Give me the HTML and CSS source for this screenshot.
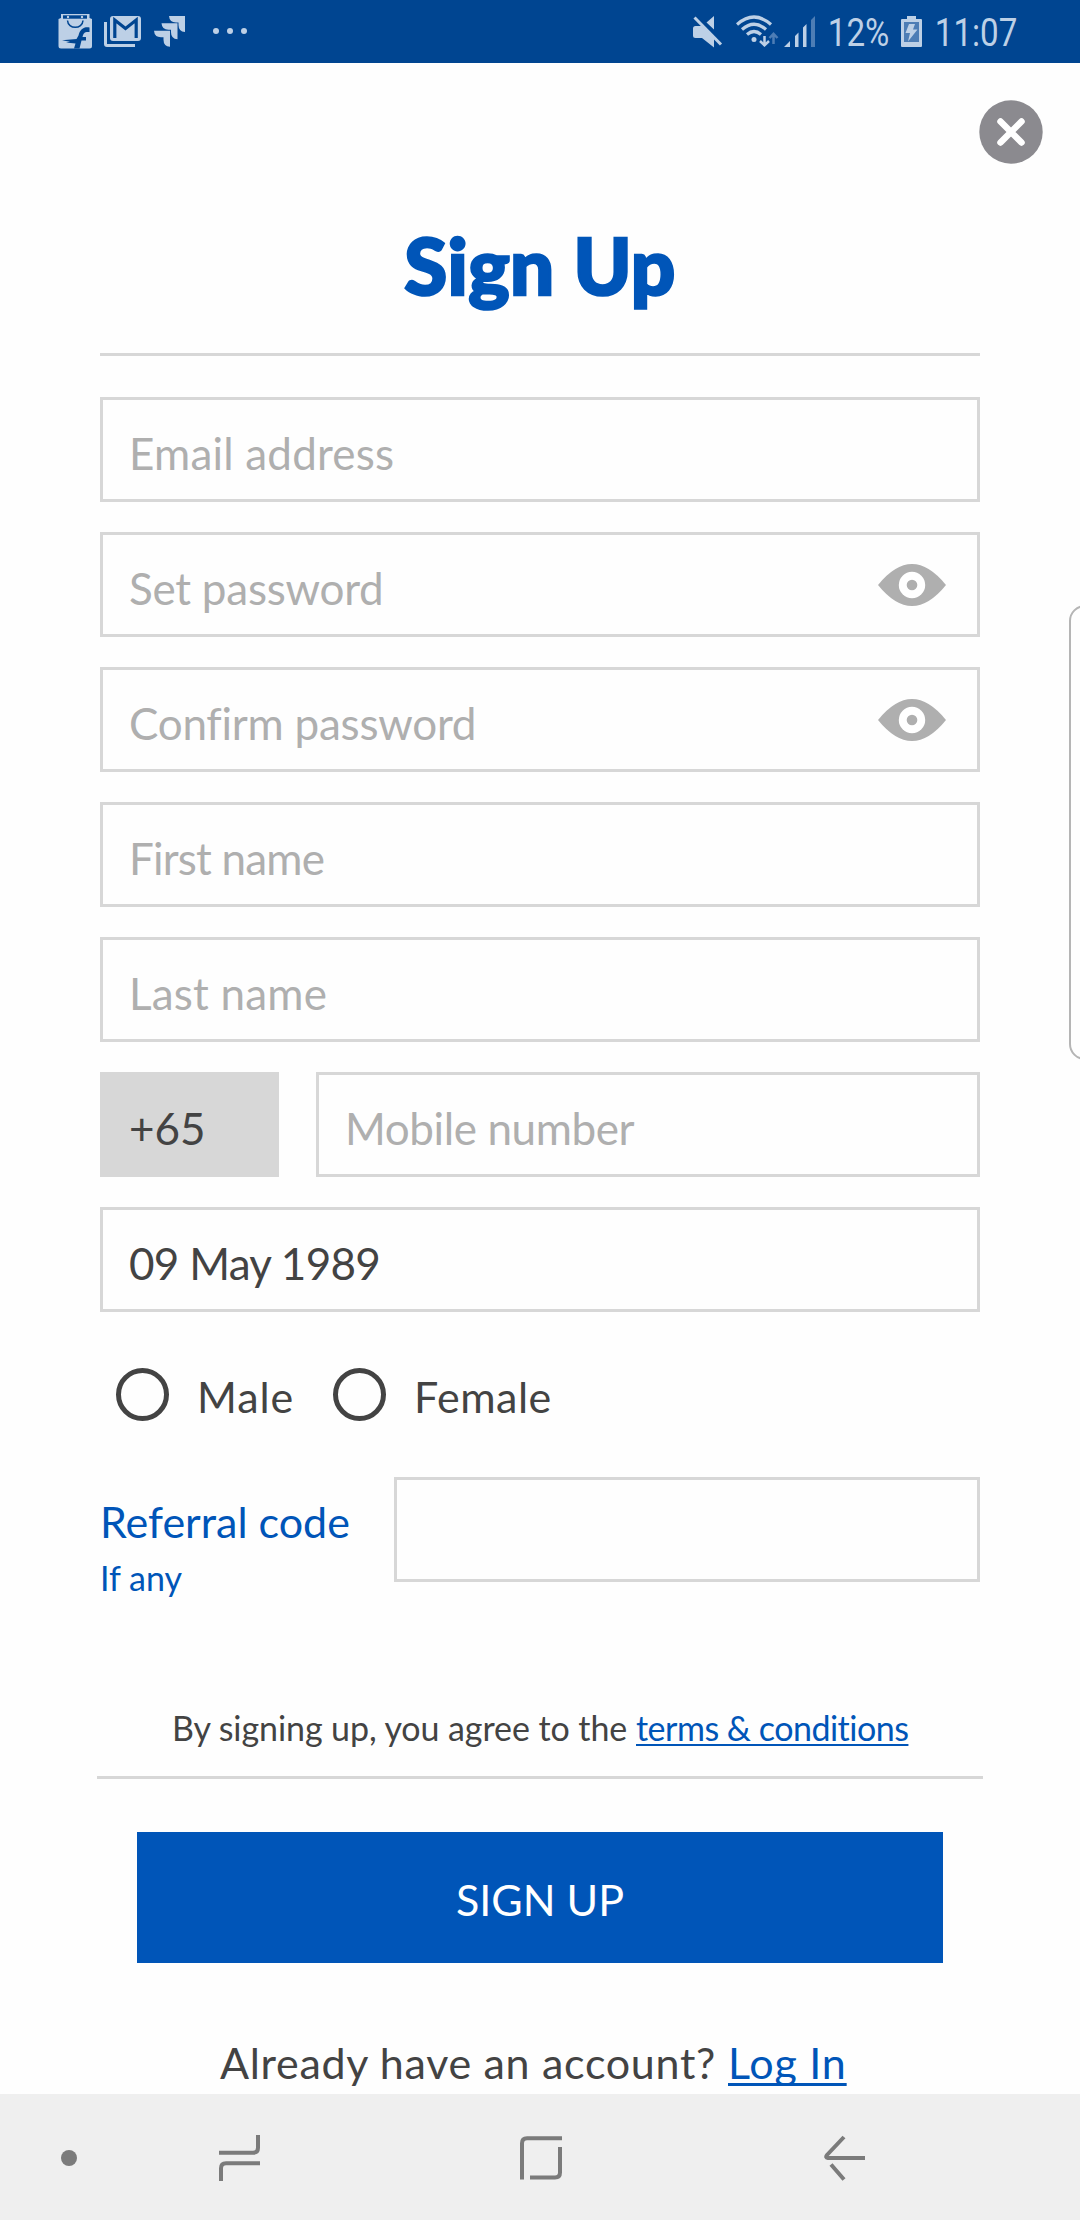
FILE: index.html
```html
<!DOCTYPE html>
<html lang="en">
<head>
<meta charset="utf-8">
<title>Sign Up</title>
<link rel="stylesheet" href="styles.css">
</head>
<body>
<div class="screen">
  <header class="status">
    <div class="status-left">
      <svg class="ic-bag" width="35" height="35" viewBox="0 0 35 35">
        <path fill="#bdd0e6" d="M3 0H31.500V4L34 5V32Q34 34.500 31.500 34.500H3Q.5 34.500.5 32V5L3 4Z"/>
        <path fill="#004591" d="M5 1.300H29V4.700H5Z"/>
        <path fill="none" stroke="#004591" stroke-width="1.500" d="M9.500 6.500C10 15.500 24.500 15.500 25 6.500"/>
        <circle cx="10" cy="3" r="1.200" fill="#bdd0e6"/><circle cx="24" cy="3" r="1.200" fill="#bdd0e6"/>
        <path fill="#004591" d="M31.500 13.500C26 12.500 22 15 20.500 21.500L18.500 25L4 26.200L12 27.700L8 28.500L17.500 29.500L16 34.500H21.500L23.500 26.500H28V23H24.500C25.500 18.500 27 17.500 31.500 18Z"/>
      </svg>
      <svg class="ic-mail" width="37" height="31" viewBox="0 0 37 31">
        <path fill="#bdd0e6" d="M0 6H3V28H31V31H3Q0 31 0 28Z"/>
        <rect x="6" y="0" width="31" height="25" rx="3" fill="#bdd0e6"/>
        <path fill="none" stroke="#004591" stroke-width="3.200" d="M10.800 22V4L21.500 12.500L32.200 4V22"/>
      </svg>
      <svg class="ic-jira" width="31" height="31" viewBox="0 0 31 31">
        <g fill="#bdd0e6"><path d="M15 0H31V16Q24.500 15.500 24.500 9V6.500H22Q15.500 6.500 15 0Z"/><path d="M7.500 7.300H23.500V23.300Q17 22.800 17 16.300V13.800H14.500Q8 13.800 7.500 7.300Z"/><path d="M0 14.800H16V30.800Q9.500 30.300 9.500 23.800V21.300H7Q.5 21.300 0 14.800Z"/></g>
      </svg>
      <svg class="ic-more" width="34" height="6" viewBox="0 0 34 6" fill="#bdd0e6"><circle cx="3" cy="3" r="3"/><circle cx="17" cy="3" r="3"/><circle cx="31" cy="3" r="3"/></svg>
    </div>
    <div class="status-right">
      <svg class="ic-mute" width="30" height="32" viewBox="0 0 30 32">
        <path fill="#bdd0e6" d="M0 12.500Q0 10 2.500 10H9L21 22V31.500L9 22H2.500Q0 22 0 19.500ZM13.500 6.500L21 0V13.500Z"/>
        <path stroke="#bdd0e6" stroke-width="3" d="M1.500 1.500L28 28.500"/>
      </svg>
      <svg class="ic-wifi" width="43" height="32" viewBox="0 0 43 32">
        <g fill="none" stroke="#bdd0e6" stroke-width="3.200"><path d="M1 9.500Q18 -5.500 35 9.500"/><path d="M6 14.500Q18 4 30 14.500"/><path d="M11 19.500Q18 13.500 25 19.500"/></g>
        <circle cx="18" cy="24.500" r="2.500" fill="#bdd0e6"/>
        <path fill="none" stroke="#bdd0e6" stroke-width="2.500" d="M28.500 21V30M24 26L28.500 30.300L33 26"/>
        <path fill="none" stroke="#4d7db5" stroke-width="2.500" d="M37.500 29V19M33.500 23L37.500 18.800L41.500 23"/>
      </svg>
      <svg class="ic-signal" width="31" height="32" viewBox="0 0 31 32">
        <path fill="#bdd0e6" d="M0 31L6 25V31ZM11 20L14.500 16.500V31H11ZM19 11.500L22.500 8V31H19Z"/><path fill="#4d7db5" d="M27 4L31 0V31H27Z"/>
      </svg>
      <span class="st-text pct">12%</span>
      <svg class="ic-batt" width="21" height="32" viewBox="0 0 21 32">
        <path fill="#bdd0e6" d="M6 0H15V3H20Q21 3 21 4V30Q21 31 20 31H1Q0 31 0 30V4Q0 3 1 3H6Z"/>
        <path fill="#4d7db5" d="M3 6H18V26H3Z"/><path fill="#bdd0e6" d="M8 8H14L12 13.500H16.500L7 25.500L9 17H4.500Z"/>
      </svg>
      <span class="st-text time">11:07</span>
    </div>
  </header>

  <main class="page">
    <div class="close-row">
      <svg width="64" height="64" viewBox="0 0 64 64"><circle cx="32" cy="32" r="31.700" fill="#8b8a8f"/><path d="M21.500 21.500L42.500 42.500M42.500 21.500L21.500 42.500" stroke="#fff" stroke-width="6.500" stroke-linecap="round"/></svg>
    </div>
    <h1 class="title">Sign Up</h1>
    <form class="form">
      <div class="field"><input class="t-email" placeholder="Email address"></div>
      <div class="field"><input class="t-set" placeholder="Set password">
        <svg class="eye" width="68" height="42" viewBox="0 0 68 42"><path fill="#afafaf" d="M0 21Q34-21 68 21Q34 63 0 21Z"/><circle cx="34" cy="21" r="13.200" fill="#fff"/><circle cx="34" cy="21" r="5.300" fill="#afafaf"/></svg></div>
      <div class="field"><input class="t-confirm" placeholder="Confirm password">
        <svg class="eye" width="68" height="42" viewBox="0 0 68 42"><path fill="#afafaf" d="M0 21Q34-21 68 21Q34 63 0 21Z"/><circle cx="34" cy="21" r="13.200" fill="#fff"/><circle cx="34" cy="21" r="5.300" fill="#afafaf"/></svg></div>
      <div class="field"><input class="t-first" placeholder="First name"></div>
      <div class="field"><input class="t-last" placeholder="Last name"></div>
      <div class="row">
        <div class="field code"><input class="t-code" value="+65"></div>
        <div class="field"><input class="t-mobile" placeholder="Mobile number"></div>
      </div>
      <div class="field"><input class="t-date" value="09 May 1989"></div>
      <div class="gender">
        <span class="radio"></span><span class="g-label male">Male</span>
        <span class="radio"></span><span class="g-label female">Female</span>
      </div>
      <div class="row referral">
        <div class="ref-label"><span class="ref-main">Referral code</span><span class="ref-sub">If any</span></div>
        <div class="field"><input></div>
      </div>
    </form>
    <p class="terms"><span class="t-agree">By signing up, you agree to the</span><a class="t-terms">terms &amp; conditions</a></p>
    <div class="submit"><span>SIGN UP</span></div>
    <p class="login"><span class="t-already">Already have an account?</span><a class="t-login">Log In</a></p>
  </main>

  <nav class="nav">
    <svg class="n-dot" width="16" height="16" viewBox="0 0 16 16"><circle cx="8" cy="8" r="8" fill="#7b7b7b"/></svg>
    <svg class="n-recent" width="42" height="46" viewBox="0 0 42 46"><path d="M0 17.800H34Q39 17.800 39 12.800V0M41 28.300H7Q2 28.300 2 33.300V46"/></svg>
    <svg class="n-home" width="42" height="46" viewBox="0 0 42 46"><path d="M42 3.300H7Q2 3.300 2 8.300V44.500M40 12V37.500Q40 42.500 35 42.500H10"/></svg>
    <svg class="n-back" width="42" height="46" viewBox="0 0 42 46"><path d="M41 23H4Q1 22.500 3 20L20 2M7 29.500L20 44.500"/></svg>
  </nav>
  <div class="edge"></div>
</div>
</body>
</html>
```
FILE: styles.css
```css
* { box-sizing: border-box; }
body { margin: 0; font-family: Lato, "Open Sans", sans-serif; color: #434343; background: #fefefe; font-variant-ligatures: none; }
svg { display: block; flex: none; }
p, h1 { margin: 0; }
.screen { position: relative; width: 1080px; height: 2220px; display: flex; flex-direction: column; overflow: hidden; }

.status { height: 63px; flex: none; background: #004591; display: flex; justify-content: space-between; }
.status-left, .status-right { display: flex; align-items: flex-start; }
.status-left { padding-left: 58px; }
.ic-bag { margin-top: 14px; }
.ic-mail { margin: 16px 0 0 11px; }
.ic-jira { margin: 16px 0 0 13px; }
.ic-more { margin: 28px 0 0 28px; }
.status-right { padding-right: 60px; }
.ic-mute, .ic-signal, .ic-batt { margin-top: 16px; }
.ic-wifi { margin: 15px 5px 0 13px; }
.st-text { font: 39px/63px Roboto, sans-serif; color: #bdd0e6; white-space: nowrap; padding-top: 2px; transform: scaleX(.85); transform-origin: left; }
.pct { width: 86px; padding-left: 15px; }
.time { width: 98px; padding-left: 15px; }

.page { flex: 1; min-height: 0; display: flex; flex-direction: column; overflow: hidden; }
.page > * { flex-shrink: 0; }
.close-row { height: 101px; padding: 37px 37px 0 0; display: flex; justify-content: flex-end; }
.title { margin: 0 100px; height: 192px; border-bottom: 3px solid #d7d7d7; padding-top: 55px; text-align: center; font-size: 78px; line-height: 92px; font-weight: 900; color: #0055b8; letter-spacing: .4px; -webkit-text-stroke: 2.500px #0055b8; }

.form { margin: 41px 100px 0; display: flex; flex-direction: column; gap: 30px; }
.field { height: 105px; min-width: 0; border: 3px solid #d7d7d7; padding: 7px 31px 0 26px; display: flex; align-items: center; }
.field input { flex: 1; min-width: 0; border: 0; padding: 0; background: none; outline: 0; font: 44px/60px Lato, sans-serif; color: #434343; letter-spacing: .2px; }
.field input::placeholder { color: #afafaf; opacity: 1; }
.field .t-set { letter-spacing: -.25px; }
.field .t-confirm { letter-spacing: -.25px; }
.field .t-first { letter-spacing: -.8px; }
.field .t-code { letter-spacing: 0; }
.field .t-mobile { letter-spacing: -.4px; }
.field .t-date { letter-spacing: -.7px; }
.eye { margin-bottom: 7px; }
.row { display: flex; gap: 37px; }
.row .field { flex: 1 1 0; }
.row .code { flex: 0 0 179px; background: #d7d7d7; }

.gender { height: 105px; padding: 0 0 0 16px; display: flex; align-items: center; }
.radio { width: 53px; height: 53px; border: 5px solid #434343; border-radius: 50%; margin-top: -1px; }
.g-label { font-size: 43px; line-height: 60px; padding: 5px 0 0 28px; letter-spacing: .5px; }
.male { width: 164px; letter-spacing: .9px; }

.referral { gap: 0; height: 105px; }
.ref-label { flex: 0 0 294px; padding-top: 15px; display: flex; flex-direction: column; color: #0055b8; white-space: nowrap; }
.ref-main { font-size: 43px; line-height: 60px; }
.ref-sub { font-size: 34px; line-height: 52px; }

.terms { margin: 106px 97px 0; height: 91px; border-bottom: 3px solid #d7d7d7; padding-left: 75px; font-size: 34px; line-height: 79px; display: flex; white-space: nowrap; }
.t-agree { width: 464px; letter-spacing: -.08px; }
.terms a, .login a { color: #0055b8; text-decoration: underline; text-decoration-skip-ink: none; }
.terms a { text-decoration-thickness: 2px; text-underline-offset: 3px; letter-spacing: -.5px; }
.submit { margin: 53px 137px 0; height: 131px; background: #0055b8; color: #fff; display: flex; justify-content: center; align-items: center; font-size: 43px; padding-top: 4px; }
.login { margin-top: 72px; padding-left: 220px; display: flex; font-size: 43px; line-height: 56px; height: 58px; white-space: nowrap; }
.t-already { width: 508px; letter-spacing: .7px; }
.login a { text-decoration-thickness: 3px; text-underline-offset: 4px; letter-spacing: .8px; }

.nav { height: 126px; flex: none; background: #efefef; display: flex; padding: 2px 0 0 61px; align-items: center; }
.n-recent, .n-home, .n-back { fill: none; stroke: #7b7b7b; stroke-width: 4; }
.n-recent { margin-left: 142px; }
.n-home { margin-left: 259px; }
.n-back { margin-left: 262px; }
.edge { position: absolute; left: 1069px; top: 605px; width: 40px; height: 455px; border: 2px solid #b5b5b5; border-radius: 16px; background: #fefefe; }
```
